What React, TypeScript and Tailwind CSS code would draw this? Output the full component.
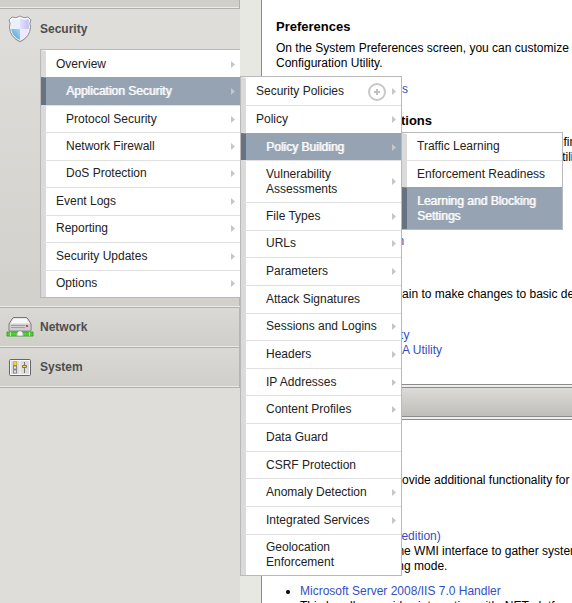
import type { ReactNode } from "react";

type Item = { label: string; arrow?: boolean; indent?: boolean; active?: boolean; add?: boolean; tall?: boolean; sub?: ReactNode };

function Arrow() {
  return (
    <svg className="h-[7px] w-1 shrink-0" viewBox="0 0 4 7" aria-hidden="true">
      <path d="M0 0 L4 3.5 L0 7Z" fill="#c6c6c6" />
    </svg>
  );
}

function MenuItem({ item, first }: { item: Item; first: boolean }) {
  const tone = item.active ? "border-l-[#677380] bg-[#96a3b3]" : "border-l-[#dadada] bg-white";
  const line = item.active ? "border-t-[#96a3b3]" : first ? "border-t-white" : "border-t-[#e0e0e0]";
  const ink = item.active ? "text-white [text-shadow:1px_0_0_#ffffffb0]" : "text-[#222]";
  return (
    <li className={`relative flex grow border-t border-l-[5px] ${tone} ${line}`}>
      <a
        href="#"
        className={`flex grow items-center justify-between pr-[5px] ${ink} ${item.indent ? "pl-5" : "pl-[10px]"} ${item.tall ? "min-h-10" : "min-h-[26px]"}`}
      >
        <span className={item.tall ? "max-w-[130px]" : "whitespace-nowrap"}>{item.label}</span>
        <span className="flex items-center gap-[6px]">
          {item.add && (
            <svg className="h-[18px] w-[18px]" viewBox="0 0 18 18" aria-hidden="true">
              <circle cx="9" cy="9" r="8" fill="none" stroke="#c8c8c8" strokeWidth="2" />
              <path d="M9 6v6M6 9h6" stroke="#c0c0c0" strokeWidth="2" />
            </svg>
          )}
          {item.arrow && <Arrow />}
        </span>
      </a>
      {item.sub}
    </li>
  );
}

function Menu({ items, className }: { items: Item[]; className: string }) {
  return (
    <ul className={`flex flex-col border border-[#b9b9b9] text-[12px] leading-[15px] ${className}`}>
      {items.map((item, i) => (
        <MenuItem key={item.label} item={item} first={i === 0} />
      ))}
    </ul>
  );
}

const buildingItems: Item[] = [
  { label: "Traffic Learning" },
  { label: "Enforcement Readiness" },
  { label: "Learning and Blocking Settings", active: true, tall: true },
];

const policyItems: Item[] = [
  { label: "Security Policies", arrow: true, add: true },
  { label: "Policy", arrow: true },
  {
    label: "Policy Building",
    arrow: true,
    indent: true,
    active: true,
    sub: <Menu items={buildingItems} className="absolute -top-[2px] left-full z-20 ml-px min-h-[98px] w-[161px] border-l-0" />,
  },
  { label: "Vulnerability Assessments", arrow: true, indent: true, tall: true },
  { label: "File Types", arrow: true, indent: true },
  { label: "URLs", arrow: true, indent: true },
  { label: "Parameters", arrow: true, indent: true },
  { label: "Attack Signatures", indent: true },
  { label: "Sessions and Logins", arrow: true, indent: true },
  { label: "Headers", arrow: true, indent: true },
  { label: "IP Addresses", arrow: true, indent: true },
  { label: "Content Profiles", arrow: true, indent: true },
  { label: "Data Guard", indent: true },
  { label: "CSRF Protection", indent: true },
  { label: "Anomaly Detection", arrow: true, indent: true },
  { label: "Integrated Services", arrow: true, indent: true },
  { label: "Geolocation Enforcement", indent: true, tall: true },
];

const securityItems: Item[] = [
  { label: "Overview", arrow: true },
  {
    label: "Application Security",
    arrow: true,
    indent: true,
    active: true,
    sub: <Menu items={policyItems} className="absolute -top-[2px] left-full z-10 min-h-[500px] w-[162px]" />,
  },
  { label: "Protocol Security", arrow: true, indent: true },
  { label: "Network Firewall", arrow: true, indent: true },
  { label: "DoS Protection", arrow: true, indent: true },
  { label: "Event Logs", arrow: true },
  { label: "Reporting", arrow: true },
  { label: "Security Updates", arrow: true },
  { label: "Options", arrow: true },
];

function ShieldIcon() {
  return (
    <svg className="h-7 w-6" viewBox="0 0 24 28" aria-hidden="true">
      <defs>
        <linearGradient id="shieldBlue" x1="0" y1="1" x2="1" y2="0">
          <stop offset="0" stopColor="#3f97cc" />
          <stop offset="1" stopColor="#a5d8f5" />
        </linearGradient>
        <linearGradient id="shieldViolet" x1="0" y1="0" x2="1" y2="0">
          <stop offset="0" stopColor="#e2e2fb" />
          <stop offset="1" stopColor="#c2bbf0" />
        </linearGradient>
        <clipPath id="shieldClip">
          <path d="M12 3 Q16 6 20 4 L21 5 Q20 8 21 12 Q21 21 12 25 Q3 21 3 12 Q4 8 3 5 L4 4 Q8 6 12 3Z" />
        </clipPath>
      </defs>
      <path d="M12 2 Q16 5 20 3 L23 6 Q21 9 23 12 Q22 23 12 27.5 Q2 23 1 12 Q3 9 1 6 L4 3 Q8 5 12 2Z" fill="#b0b1b2" />
      <path d="M12 1 Q16 4 20 2 L23 5 Q21 8 22.5 12 Q22 22 12 26.5 Q2 22 1.5 12 Q3 8 1 5 L4 2 Q8 4 12 1Z" fill="#f8fafd" stroke="#8d9299" strokeWidth="1" />
      <g clipPath="url(#shieldClip)">
        <path d="M2 3h10v11H2z" fill="#e9f0fb" />
        <path d="M12 3h10v11H12z" fill="url(#shieldViolet)" />
        <path d="M2 14h10v12H2z" fill="url(#shieldBlue)" />
        <path d="M12 14h10v12H12z" fill="#eee9fd" />
      </g>
    </svg>
  );
}

function NetworkIcon() {
  return (
    <svg className="h-5 w-7" viewBox="0 0 28 20" aria-hidden="true">
      <path d="M8 .5h12q1 0 2 1.500l3 5v6q0 1-1 1H4q-1 0-1-1V7l3-5q1-1.500 2-1.500z" fill="#e5e5e5" stroke="#777" />
      <path d="M8 2h12l3 4H5z" fill="#f8f8f8" />
      <path d="M4 7h20v6H4z" fill="#cfcfcf" />
      <path d="M5 8.500h14M5 10.500h14" stroke="#a2a2a2" />
      <path d="M20 8h2v2h-2z" fill="#e03848" />
      <path d="M1 15h26v4H1z" fill="#4bd52c" stroke="#4a9a38" />
      <path d="M4.500 15v4M23.500 15v4" stroke="#a8f090" />
      <path d="M11 19v-3l2-2h2l2 2v3z" fill="#f8f8f8" stroke="#aaa" />
    </svg>
  );
}

function SystemIcon() {
  return (
    <svg className="h-[19px] w-6" viewBox="0 0 24 19" aria-hidden="true">
      <rect x="1.500" y="1.500" width="21" height="16" rx="1" fill="#dcdcdc" stroke="#666" />
      <path d="M2.500 2.500h19v14h-19zM12 3v13" fill="none" stroke="#f8f8f8" />
      <path d="M5 3.500h4v12h-4z" fill="#8a8a8a" />
      <path d="M5.500 4h3v3h-3z" fill="#ffd51c" />
      <path d="M6 8.500h2v2H6zM6 12.500h2v2H6z" fill="#e8e8e8" />
      <path d="M16.500 4v11" stroke="#777" />
      <path d="M14.500 7.500h4v2h-4z" fill="#f0d840" stroke="#8b7b35" />
    </svg>
  );
}

function Section({ icon, title, children }: { icon: ReactNode; title: string; children?: ReactNode }) {
  const skin = children ? "from-[#dfdeda] to-[#d1d0cb]" : "border-r border-r-[#b5b5b3] from-[#dad9d5] to-[#cfcec9]";
  return (
    <section className={`border-b border-b-[#b0b0ae] bg-linear-to-b ${skin}`}>
      <h2 className={`flex items-center text-[12px] font-bold text-[#4d4d4d] ${children ? "h-10" : "h-[38px]"}`}>
        <span className="flex w-10 justify-center">{icon}</span>
        {title}
      </h2>
      {children}
      {children && <div className="h-2 border-r border-r-[#b5b5b3]" />}
      <div className="h-px bg-[#ebebe8]" />
    </section>
  );
}

const link = "text-[#2f50c4]";

export default function App() {
  return (
    <div className="flex h-screen overflow-hidden bg-[#e8e8e3] font-['Liberation_Sans',Arial,sans-serif]">
      <nav className="w-60 shrink-0 bg-[#deddd9]">
        <div className="h-[9px] border-r border-b border-[#b0b0ae] bg-[#d0cfca] pt-[7px]">
          <div className="h-px bg-[#ebebe8]" />
        </div>
        <Section icon={<ShieldIcon />} title="Security">
          <Menu items={securityItems} className="ml-10 min-h-[249px] border-r-0" />
        </Section>
        <Section icon={<NetworkIcon />} title="Network" />
        <Section icon={<SystemIcon />} title="System" />
      </nav>
      <main className="ml-[21px] min-w-0 grow overflow-hidden border-l border-[#8c8c8c] bg-white text-[12px] leading-[15px] whitespace-nowrap text-black">
        <div className="px-[14px]">
          <ul className="-mt-[11px] pl-6">
            <li><a href="#" className={link}>User Documentation</a></li>
          </ul>
          <h3 className="mt-[15px] text-[13px] font-bold">Preferences</h3>
          <p className="mt-[7px]">On the System Preferences screen, you can customize<br />Configuration Utility.</p>
          <ul className="mt-[11px] pl-6">
            <li><a href="#" className={link}>System Preferences</a></li>
          </ul>
          <h3 className="mt-4 text-[13px] font-bold">Additional Setup Options</h3>
          <p className="mt-[7px]">Use the following additional configuration options to refine<br />the system setup, then go back to the Configuration Utility</p>
          <ul className="mt-[69px] pl-6">
            <li><a href="#" className={link}>User Authentication</a></li>
          </ul>
          <p className="mt-[38px]">Run the Setup Utility again to make changes to basic device</p>
          <ul className="mt-[26px] pl-6">
            <li><a href="#" className={link}>Run the Setup Utility</a></li>
            <li><a href="#" className={link}>Run Config Sync/HA Utility</a></li>
          </ul>
        </div>
        <div className="mt-[26px] border-y border-[#8c8c8c] bg-[#eeeeec] py-[2px]">
          <div className="h-[30px] border-y border-[#8c8c8c] bg-linear-to-b from-[#dcdbd7] to-[#bfbeba]" />
        </div>
        <div className="px-[14px]">
          <p className="mt-[53px]">The following plugins provide additional functionality for IIS</p>
          <ul className="mt-[41px] list-disc pl-6">
            <li>
              <a href="#" className={link}>IIS Plug-ins (32 bit edition)</a>
              <p>This plug-in uses the WMI interface to gather system<br />metrics in monitoring mode.</p>
            </li>
            <li className="mt-[10px]">
              <a href="#" className={link}>Microsoft Server 2008/IIS 7.0 Handler</a>
              <p>This handler provides interaction with .NET platform</p>
            </li>
          </ul>
        </div>
      </main>
    </div>
  );
}
